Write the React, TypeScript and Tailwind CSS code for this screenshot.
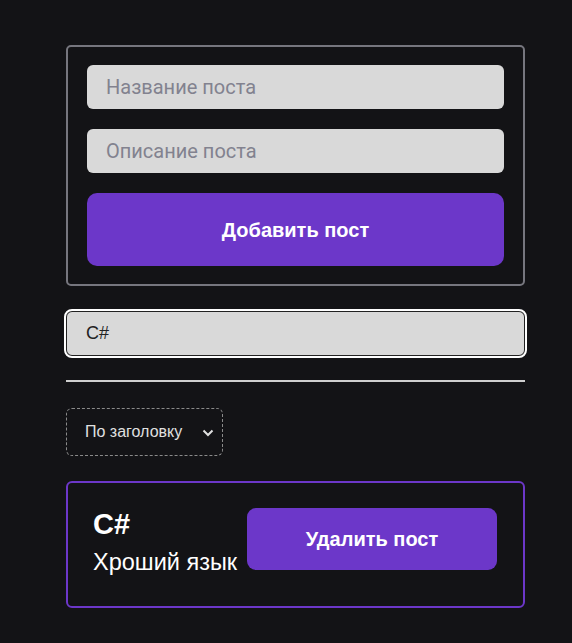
import { useState } from 'react';

interface Post {
  id: number;
  title: string;
  body: string;
}

export default function App() {
  const [posts, setPosts] = useState<Post[]>([{ id: 1, title: 'C#', body: 'Хроший язык' }]);
  const [title, setTitle] = useState('');
  const [body, setBody] = useState('');
  const [query, setQuery] = useState('C#');
  const [sort, setSort] = useState('title');

  const addPost = () => {
    if (!title) return;
    setPosts([...posts, { id: Date.now(), title, body }]);
    setTitle('');
    setBody('');
  };

  return (
    <div className="min-h-[643px] bg-[#131316] pt-[45px] pb-9 pl-[66px] pr-[47px] font-[Liberation_Sans,Arial,sans-serif]">
      <div className="flex flex-col">
        <form
          onSubmit={(e) => {
            e.preventDefault();
            addPost();
          }}
          className="flex flex-col gap-5 rounded-[5px] border-2 border-[#76767e] px-[19px] pt-[18px] pb-[18px]"
        >
          <input
            value={title}
            onChange={(e) => setTitle(e.target.value)}
            placeholder="Название поста"
            className="h-[44px] rounded-[6px] bg-[#d9d9d9] px-[19px] font-[Roboto,sans-serif] text-[20px] text-[#222] outline-none placeholder:text-[#82828f]"
          />
          <input
            value={body}
            onChange={(e) => setBody(e.target.value)}
            placeholder="Описание поста"
            className="h-[44px] rounded-[6px] bg-[#d9d9d9] px-[19px] font-[Roboto,sans-serif] text-[20px] text-[#222] outline-none placeholder:text-[#82828f]"
          />
          <button
            type="submit"
            className="h-[73px] rounded-[10px] bg-[#6c37c9] font-[Liberation_Sans,Arial,sans-serif] text-[20px] font-bold text-white"
          >
            Добавить пост
          </button>
        </form>

        <input
          value={query}
          onChange={(e) => setQuery(e.target.value)}
          className="mt-[25px] h-[45px] rounded-[6px] border border-[#222] bg-[#d9d9d9] px-[19px] font-[Liberation_Sans,Arial,sans-serif] text-[18px] text-[#222] outline-2 outline-white"
        />

        <hr className="mt-[24px] border-t-2 border-[#cfcfcf]" />

        <div className="mt-[26px] flex">
          <div className="relative flex h-[48px] w-[157px] items-center rounded-[6px] border border-dashed border-[#8a8a8a]">
            <select
              value={sort}
              onChange={(e) => setSort(e.target.value)}
              className="h-full w-full appearance-none bg-transparent pl-[18px] pr-[30px] font-[Liberation_Sans,Arial,sans-serif] text-[16px] text-[#e0e0e0] outline-none"
            >
              <option value="title">По заголовку</option>
              <option value="body">По описанию</option>
            </select>
            <svg
              className="pointer-events-none absolute right-[8px] top-[20px]"
              width="12"
              height="8"
              viewBox="0 0 12 8"
              fill="none"
            >
              <path d="M1.5 1.5l4.5 4.5 4.5-4.5" stroke="#e0e0e0" strokeWidth="2" />
            </svg>
          </div>
        </div>

        <div className="mt-[25px] flex flex-col gap-4">
          {posts.map((p) => (
            <div
              key={p.id}
              className="flex h-[127px] items-start justify-between rounded-[6px] border-2 border-[#6c37c9] pt-[25px] pl-[25px] pr-[26px]"
            >
              <div className="flex flex-col">
                <div className="mt-[2px] text-[29px] font-bold leading-[29px] text-white">{p.title}</div>
                <div className="mt-[11px] text-[23.5px] leading-[24px] text-white">{p.body}</div>
              </div>
              <button
                onClick={() => setPosts(posts.filter((x) => x.id !== p.id))}
                className="h-[62px] w-[250px] rounded-[9px] bg-[#6c37c9] font-[Liberation_Sans,Arial,sans-serif] text-[20px] font-bold text-white"
              >
                Удалить пост
              </button>
            </div>
          ))}
        </div>
      </div>
    </div>
  );
}
